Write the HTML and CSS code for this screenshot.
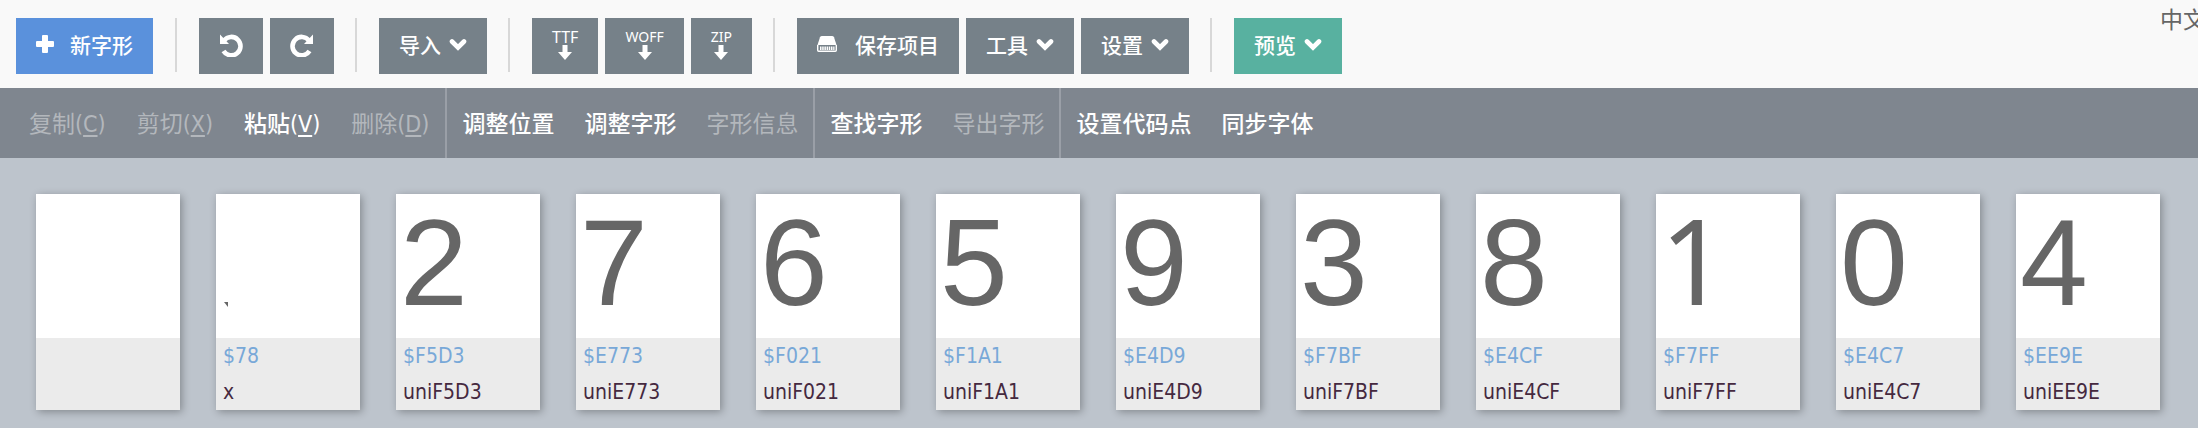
FILE: index.html
```html
<!DOCTYPE html>
<html lang="zh-CN">
<head>
<meta charset="utf-8">
<title>字体编辑器</title>
<link rel="stylesheet" href="styles.css">
</head>
<body>
<svg class="defs" aria-hidden="true">
  <symbol id="chevron" viewBox="0 0 18 13"><path d="M3 3.500 9 9.500 15 3.500" fill="none" stroke="currentColor" stroke-width="4.600" stroke-linecap="round"/></symbol>
  <symbol id="arrow-down" viewBox="0 0 14 15"><path d="M4.500 0h5v7H14L7 15 0 7h4.500z" fill="currentColor"/></symbol>
  <symbol id="undo" viewBox="0 0 24 24"><path d="M5 7.500A9.200 9.200 0 1 1 4.500 18" fill="none" stroke="currentColor" stroke-width="4.600"/><path d="M1 1.500v9.500h9z" fill="currentColor"/></symbol>
</svg>
<header class="topbar">
  <div class="group"><button class="btn primary"><svg class="plus" viewBox="0 0 18 18"><path d="M7 0h4q1 0 1 1v5h5q1 0 1 1v4q0 1-1 1h-5v5q0 1-1 1H7q-1 0-1-1v-5H1q-1 0-1-1V7q0-1 1-1h5V1q0-1 1-1z" fill="currentColor"/></svg>新字形</button></div>
  <div class="group">
    <button class="btn icon" aria-label="撤销"><svg class="turn"><use href="#undo"/></svg></button>
    <button class="btn icon" aria-label="重做"><svg class="turn flip"><use href="#undo"/></svg></button>
  </div>
  <div class="group"><button class="btn drop">导入<svg class="chevron"><use href="#chevron"/></svg></button></div>
  <div class="group">
    <button class="btn export large">TTF<svg class="arrow"><use href="#arrow-down"/></svg></button>
    <button class="btn export">WOFF<svg class="arrow"><use href="#arrow-down"/></svg></button>
    <button class="btn export">ZIP<svg class="arrow"><use href="#arrow-down"/></svg></button>
  </div>
  <div class="group">
    <button class="btn save"><svg class="disk" viewBox="0 0 20 16"><path d="M5 0h10q1.500 0 2 1.300L19.500 9H.5L3 1.300Q3.500 0 5 0z" fill="currentColor"/><path d="M.7 9v5.300q0 1 1 1h16.600q1 0 1-1V9" fill="none" stroke="currentColor" stroke-width="1.400"/><path d="M3 12.200h14.500" stroke="currentColor" stroke-width="3.400" stroke-dasharray="1.500 .7"/></svg>保存项目</button>
    <button class="btn drop">工具<svg class="chevron"><use href="#chevron"/></svg></button>
    <button class="btn drop">设置<svg class="chevron"><use href="#chevron"/></svg></button>
  </div>
  <div class="group"><button class="btn drop preview">预览<svg class="chevron"><use href="#chevron"/></svg></button></div>
  <a class="lang" href="#">中文</a>
</header>
<nav class="commands">
  <div class="set"><button disabled>复制(<u>C</u>)</button><button disabled>剪切(<u>X</u>)</button><button>粘贴(<u>V</u>)</button><button disabled>删除(<u>D</u>)</button></div>
  <div class="set"><button>调整位置</button><button>调整字形</button><button disabled>字形信息</button></div>
  <div class="set"><button>查找字形</button><button disabled>导出字形</button></div>
  <div class="set"><button>设置代码点</button><button>同步字体</button></div>
</nav>
<main class="glyphs">
  <article class="card"><div class="shape"></div><div class="info"></div></article>
  <article class="card"><div class="shape"><svg class="tick" viewBox="0 0 4 5"><path d="M0 0h4v5z" fill="currentColor"/></svg></div><div class="info"><span class="code">$78</span><span>x</span></div></article>
  <article class="card"><div class="shape">2</div><div class="info"><span class="code">$F5D3</span><span>uniF5D3</span></div></article>
  <article class="card"><div class="shape">7</div><div class="info"><span class="code">$E773</span><span>uniE773</span></div></article>
  <article class="card"><div class="shape">6</div><div class="info"><span class="code">$F021</span><span>uniF021</span></div></article>
  <article class="card"><div class="shape">5</div><div class="info"><span class="code">$F1A1</span><span>uniF1A1</span></div></article>
  <article class="card"><div class="shape">9</div><div class="info"><span class="code">$E4D9</span><span>uniE4D9</span></div></article>
  <article class="card"><div class="shape">3</div><div class="info"><span class="code">$F7BF</span><span>uniF7BF</span></div></article>
  <article class="card"><div class="shape">8</div><div class="info"><span class="code">$E4CF</span><span>uniE4CF</span></div></article>
  <article class="card"><div class="shape plain">1</div><div class="info"><span class="code">$F7FF</span><span>uniF7FF</span></div></article>
  <article class="card"><div class="shape">0</div><div class="info"><span class="code">$E4C7</span><span>uniE4C7</span></div></article>
  <article class="card"><div class="shape">4</div><div class="info"><span class="code">$EE9E</span><span>uniEE9E</span></div></article>
</main>
</body>
</html>
```
FILE: styles.css
```css
* { box-sizing: border-box; }
body {
  margin: 0;
  min-height: 100vh;
  background: #bdc4cc;
  font-family: "DejaVu Sans Condensed", "Noto Sans CJK SC", sans-serif;
  overflow-x: hidden;
}
button { border: 0; margin: 0; font: inherit; color: inherit; background: none; white-space: nowrap; }
svg { display: block; flex: none; }
.defs { display: none; }

.topbar {
  display: flex;
  align-items: flex-start;
  padding: 18px 0 14px 16px;
  background: #f9f9f9;
}
.group { display: flex; gap: 7px; padding-right: 22px; }
.group + .group { padding-left: 24px; padding-right: 21px; background: linear-gradient(#d8d8d8, #d8d8d8) 0 0 / 2px 54px no-repeat; }
.btn {
  display: flex;
  align-items: center;
  justify-content: center;
  height: 56px;
  padding: 0 20px 4px;
  background: #768189;
  color: #fff;
  font: 500 21px/24px "Noto Sans CJK SC", sans-serif;
}
.primary { background: #5a91dc; gap: 16px; }
.icon { width: 64px; padding-bottom: 2px; }
.drop { gap: 8px; }
.save { gap: 18px; }
.preview { background: #58b1a0; }
.export { flex-direction: column; font: 14px/16px "Noto Sans", sans-serif; }
.large { font-size: 16px; }
.plus { width: 18px; height: 18px; }
.turn { width: 24px; height: 24px; }
.flip { transform: scaleX(-1); }
.chevron { width: 18px; height: 13px; }
.arrow { width: 14px; height: 15px; }
.disk { width: 20px; height: 16px; }
.lang {
  align-self: flex-start;
  flex: none;
  margin: -18px -8px 0 auto;
  font: 23px/36px "Noto Sans CJK SC", sans-serif;
  color: #666;
  text-decoration: none;
}

.commands { display: flex; height: 70px; background: #7f868f; color: #fff; font-size: 23px; font-weight: 500; }
.set { display: flex; }
.set:first-child { padding-left: 14px; }
.set + .set { border-left: 2px solid #9a9fa7; }
.commands button { padding: 0 15px 2px; }
.commands .set:first-child button { padding-right: 16px; }
.commands button:disabled { color: #b3b7bc; font-weight: 400; }
.commands u { text-decoration-thickness: 2px; text-underline-offset: 3px; }

.glyphs { display: flex; flex-wrap: wrap; gap: 36px; padding: 36px 24px 12px 36px; }
.card { width: 144px; background: #fff; box-shadow: 2px 2px 8px rgba(0, 0, 0, .3); }
.shape {
  height: 144px;
  padding-left: 4px;
  font: 122px/138px "Liberation Sans", Arial, sans-serif;
  color: #666;
}
.plain { font: 118px/132px "Noto Sans", sans-serif; }
.tick { width: 4px; height: 5px; margin: 108px 0 0 4px; }
.shape:has(.tick) { display: flex; }
.info {
  display: flex;
  flex-direction: column;
  height: 72px;
  padding-left: 7px;
  background: #ebebeb;
  color: #45293f;
  font-size: 21px;
  line-height: 36px;
}
.code { color: #78a8d8; }
```
